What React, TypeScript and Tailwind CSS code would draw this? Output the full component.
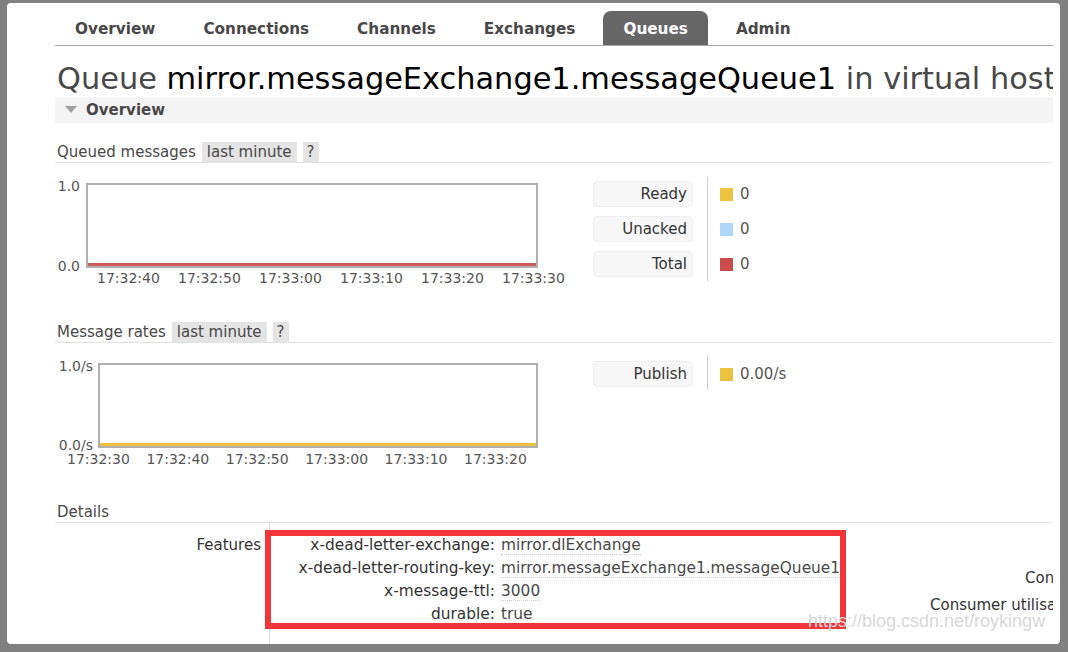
const tabs = ["Overview", "Connections", "Channels", "Exchanges", "Queues", "Admin"]

interface Axis {
    left: number,
    top: number,
    text: string
}

interface Chart {
    yLabels: Axis[],
    xLabels: Axis[],
    boxLeft: number,
    boxTop: number,
    boxWidth: number,
    lineColor: string
}

const Chart = ({ yLabels, xLabels, boxLeft, boxTop, boxWidth, lineColor }: Chart) => {
    return (
        <div className="relative w-[538px] h-full shrink-0 text-[14px] leading-[16px] text-[#555]">
            {yLabels.map((l) => (
                <span key={l.text} className="absolute text-right" style={{ top: l.top, left: 0, width: l.left }}>{l.text}</span>
            ))}
            <div className="absolute h-[85px] border-2 border-[#b0b0b0] bg-white" style={{ left: boxLeft, top: boxTop, width: boxWidth }}>
                <div className="absolute left-0 right-0 bottom-0 h-[3px]" style={{ background: lineColor }} />
            </div>
            {xLabels.map((l) => (
                <span key={l.text} className="absolute whitespace-nowrap" style={{ left: l.left, top: l.top }}>{l.text}</span>
            ))}
        </div>
    )
}

const LegendBox = ({ label }: { label: string }) => (
    <div className="w-[100px] h-[26px] rounded-[4px] bg-[#f7f7f7] border border-[#eeeeee] flex items-center justify-end pr-[5px] text-[15px] text-[#333]">
        {label}
    </div>
)

const LegendValue = ({ color, value }: { color: string, value: string }) => (
    <div className="h-[26px] flex items-center gap-[7px] text-[15px] text-[#555]">
        <span className="w-[13px] h-[13px]" style={{ background: color }} />
        <span>{value}</span>
    </div>
)

const SectionHead = ({ title, tag }: { title: string, tag?: boolean }) => (
    <div className="flex items-center h-[21px] border-b border-[#e2e2e2] text-[15px] text-[#484848] pl-[2px]">
        <span>{title}</span>
        {tag && <>
            <span className="ml-[6px] h-[20px] px-[5px] bg-[#e4e4e4] flex items-center">last minute</span>
            <span className="ml-[6px] h-[20px] px-[4px] bg-[#e4e4e4] flex items-center">?</span>
        </>}
    </div>
)

const features = [
    ["x-dead-letter-exchange:", "mirror.dlExchange"],
    ["x-dead-letter-routing-key:", "mirror.messageExchange1.messageQueue1"],
    ["x-message-ttl:", "3000"],
    ["durable:", "true"],
]

const App = () => {
    return (
        <div className="relative w-[1068px] h-[652px] bg-[#808080] pt-[3px] pl-[7px] pr-[8px] pb-[8px] font-['DejaVu_Sans',sans-serif] overflow-hidden">
            <div className="w-full h-full bg-white rounded-[4px] pl-[48px] pr-[7px] pt-[8px] overflow-hidden">
                <div className="w-full h-full overflow-hidden">
                    {/* nav */}
                    <div className="flex gap-[8px] h-[35px] border-b border-[#a8a8a8]">
                        {tabs.map((t) => (
                            <div key={t} className={`px-[20px] pt-[3px] flex items-center text-[15.25px] font-bold rounded-t-[8px] ${t === "Queues" ? "bg-[#666666] text-white" : "text-[#484848]"}`}>
                                {t}
                            </div>
                        ))}
                    </div>

                    <h1 className="mt-[16px] ml-[2px] h-[34px] leading-[34px] text-[30.4px] whitespace-nowrap text-[#484848]">
                        Queue <span className="text-black">mirror.messageExchange1.messageQueue1</span> in virtual host /
                    </h1>

                    <div className="mt-[1px] h-[26px] bg-[#f4f4f4] flex items-center pl-[10px] gap-[9px] text-[15px] font-bold text-[#484848]">
                        <svg width="12" height="8" viewBox="0 0 12 8"><path d="M0 0 L12 0 L6 7 Z" fill="#a0a0a0" /></svg>
                        Overview
                    </div>

                    <div className="mt-[19px]">
                        <SectionHead title="Queued messages" tag />
                    </div>

                    <div className="mt-[14px] h-[113px] flex">
                        <Chart
                            yLabels={[{ left: 25, top: 1, text: "1.0" }, { left: 25, top: 81, text: "0.0" }]}
                            xLabels={["17:32:40", "17:32:50", "17:33:00", "17:33:10", "17:33:20", "17:33:30"].map((t, i) => ({ left: 42 + i * 81, top: 93, text: t }))}
                            boxLeft={31}
                            boxTop={6}
                            boxWidth={452}
                            lineColor="#cf5a5a"
                        />
                        <div className="flex flex-col gap-[9px] pt-[4px]">
                            <LegendBox label="Ready" />
                            <LegendBox label="Unacked" />
                            <LegendBox label="Total" />
                        </div>
                        <div className="ml-[14px] w-px h-[104px] bg-[#d0d0d0]" />
                        <div className="ml-[12px] flex flex-col gap-[9px] pt-[4px]">
                            <LegendValue color="#edc240" value="0" />
                            <LegendValue color="#afd8f8" value="0" />
                            <LegendValue color="#cb4b4b" value="0" />
                        </div>
                    </div>

                    <div className="mt-[32px]">
                        <SectionHead title="Message rates" tag />
                    </div>

                    <div className="mt-[13px] h-[115px] flex">
                        <Chart
                            yLabels={[{ left: 38, top: 2, text: "1.0/s" }, { left: 38, top: 81, text: "0.0/s" }]}
                            xLabels={["17:32:30", "17:32:40", "17:32:50", "17:33:00", "17:33:10", "17:33:20"].map((t, i) => ({ left: 12 + i * 79.4, top: 95, text: t }))}
                            boxLeft={43}
                            boxTop={7}
                            boxWidth={440}
                            lineColor="#edc240"
                        />
                        <div className="pt-[5px]">
                            <LegendBox label="Publish" />
                        </div>
                        <div className="ml-[14px] w-px h-[34px] bg-[#d0d0d0]" />
                        <div className="ml-[12px] pt-[5px]">
                            <LegendValue color="#edc240" value="0.00/s" />
                        </div>
                    </div>

                    <div className="mt-[31px] h-[21px] border-b border-[#e2e2e2] text-[15px] text-[#484848] pl-[2px] leading-[20px]">
                        Details
                    </div>

                    <div className="flex text-[15px] text-[#484848]">
                        <div className="w-[214px] shrink-0 text-right pr-[8px] pt-[11px] leading-[23px] text-[#333]">Features</div>
                        <div className="border-l border-[#dddddd] h-[130px] pt-[11px] w-[530px] shrink-0 text-[15.4px]">
                            {features.map(([k, v]) => (
                                <div key={k} className="flex h-[23px] items-center whitespace-nowrap">
                                    <span className="w-[225px] shrink-0 text-right text-[#333]">{k}</span>
                                    <span className="ml-[6px] leading-[18px] border-b border-dotted border-[#cccccc]">{v}</span>
                                </div>
                            ))}
                        </div>
                        <div className="ml-[131px] shrink-0 pt-[44px] flex flex-col gap-[5px] text-[#333] whitespace-nowrap leading-[22px]">
                            <span className="pl-[95px]">Consumers</span>
                            <span>Consumer utilisation</span>
                        </div>
                    </div>
                </div>
            </div>

            {/* annotation */}
            <div className="absolute left-[265px] top-[530px] w-[581px] h-[99px] border-[6px] border-[#f2353b]" />
            <div className="absolute left-[808px] top-[610px] text-[18px] leading-[22px] text-[#d8d8d8] font-['Liberation_Sans',sans-serif]">
                https://blog.csdn.net/roykingw
            </div>
        </div>
    )
}

export default App
